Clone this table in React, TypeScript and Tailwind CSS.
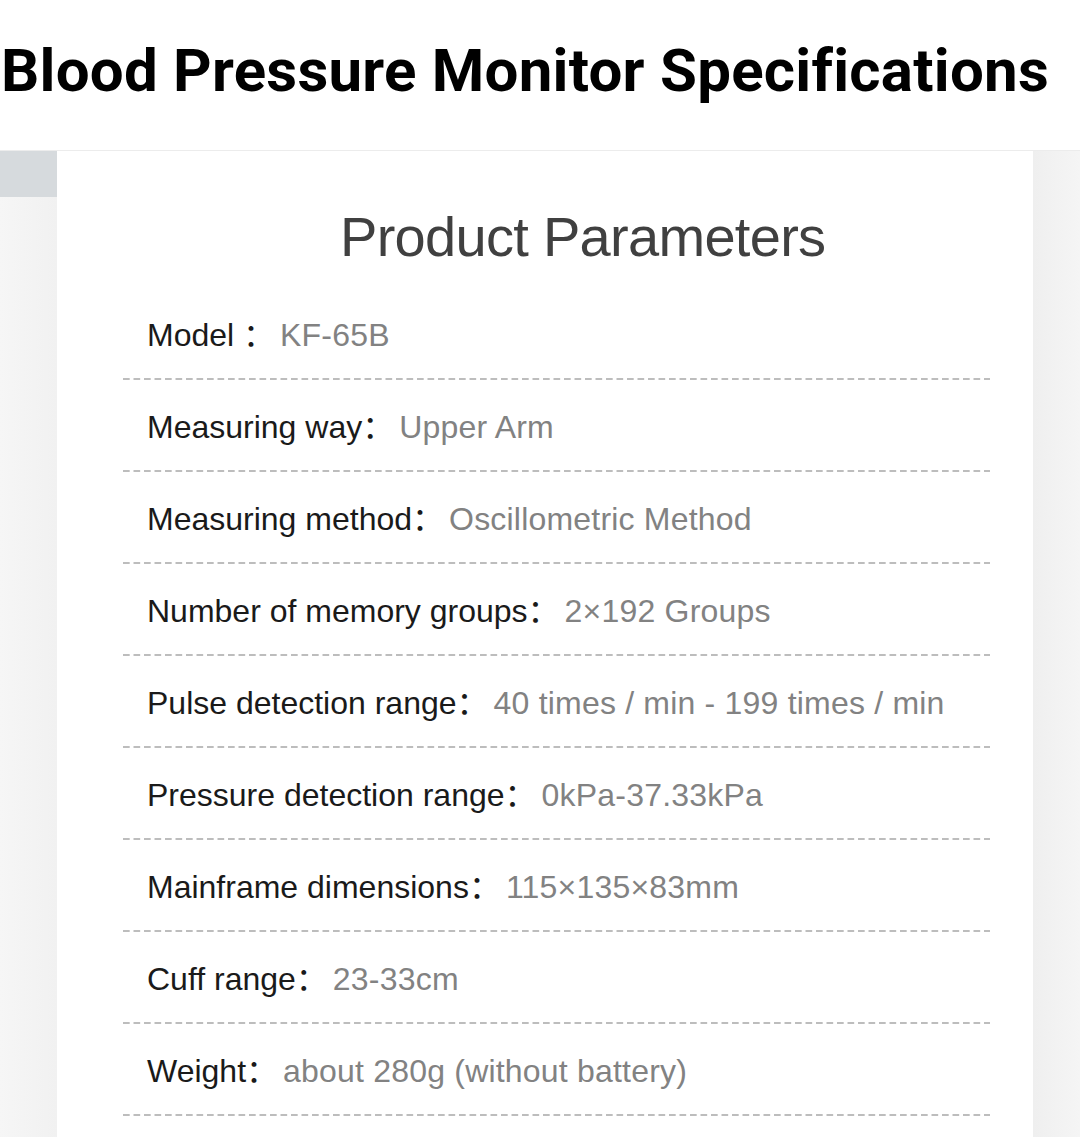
import React from "react";

const rows: { label: string; value: string }[] = [
  { label: "Model ：", value: "KF-65B" },
  { label: "Measuring way：", value: "Upper Arm" },
  { label: "Measuring method：", value: "Oscillometric Method" },
  { label: "Number of memory groups：", value: "2×192 Groups" },
  { label: "Pulse detection range：", value: "40 times / min - 199 times / min" },
  { label: "Pressure detection range：", value: "0kPa-37.33kPa" },
  { label: "Mainframe dimensions：", value: "115×135×83mm" },
  { label: "Cuff range：", value: "23-33cm" },
  { label: "Weight：", value: "about 280g (without battery)" },
];

export default function App() {
  return (
    <div className="w-[1080px] h-[1137px] bg-white overflow-hidden">
      <div className="h-[150px] flex items-center pb-[8px]">
        <h1 className="text-[60px] leading-none font-bold text-black tracking-[0.25px] font-['Roboto',sans-serif] pl-[1px]">
          Blood Pressure Monitor Specifications
        </h1>
      </div>
      <div className="flex h-[987px] border-t border-[#ececec]">
        <div className="w-[57px] flex flex-col">
          <div className="h-[46px] bg-[#d6dadd]" />
          <div className="flex-1 bg-[linear-gradient(to_right,#f6f6f6,#f1f1f1)]" />
        </div>
        <div className="w-[976px] bg-white flex flex-col font-['Liberation_Sans','Noto_Sans_CJK_SC',sans-serif]">
          <div className="pt-[58px] pl-[283px] text-[56px] leading-none tracking-[-0.7px] text-[#404040]">
            Product Parameters
          </div>
          <div className="ml-[66px] w-[867px] mt-[23px] flex flex-col">
            {rows.map((r) => (
              <div key={r.label} className="h-[92px] flex flex-col">
                <div className="flex-1 flex items-center pl-[24px] pt-[4px] text-[32px] leading-none">
                  <span className="text-[#1a1a1a]">{r.label}</span>
                  <span className="text-[#828282] ml-[5px] tracking-[0.2px]">{r.value}</span>
                </div>
                <div className="h-[2px] bg-[linear-gradient(to_right,#bdbdbd_60%,transparent_0)] bg-[length:10.5px_2px] bg-repeat-x" />
              </div>
            ))}
          </div>
        </div>
        <div className="flex-1 bg-[linear-gradient(to_right,#efefef,#f5f5f5)]" />
      </div>
    </div>
  );
}
